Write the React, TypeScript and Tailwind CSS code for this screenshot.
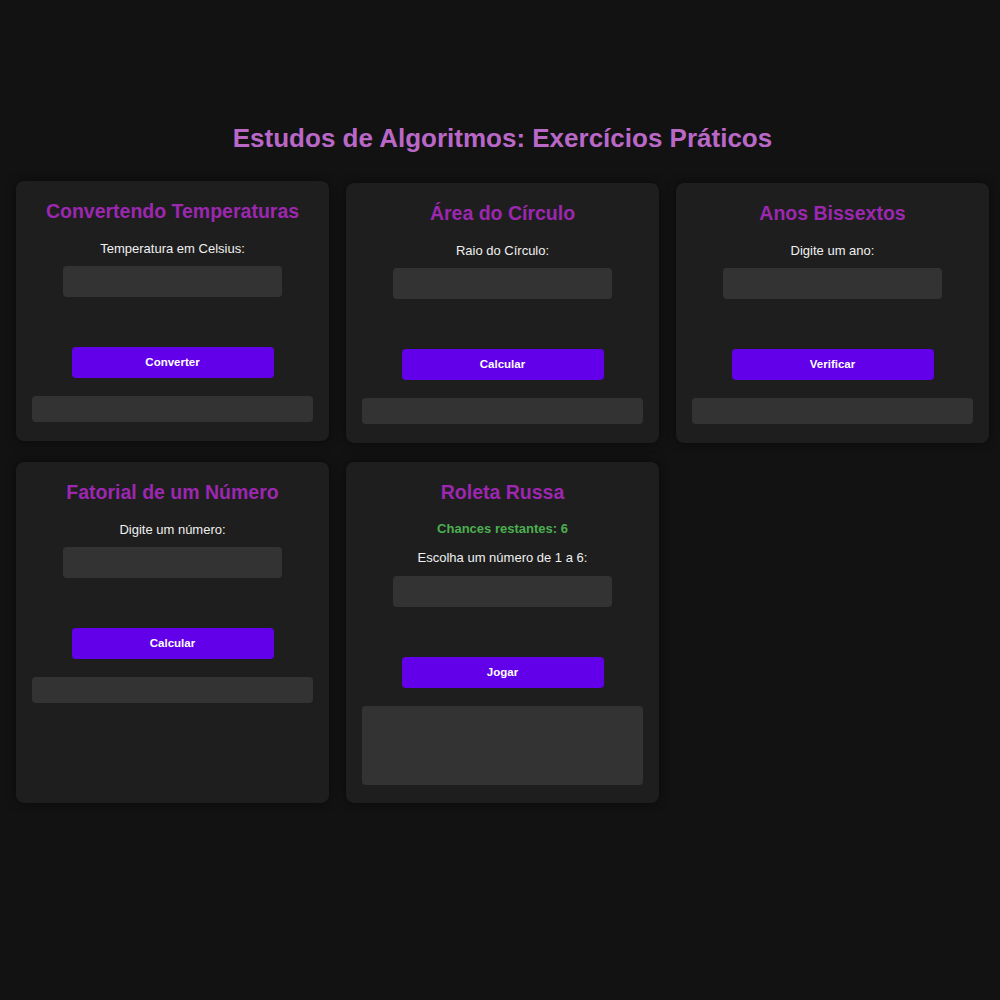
import { useState } from "react";

type Exercise = {
  title: string;
  label: string;
  button: string;
  chances?: number;
  resultHeight: string;
};

const EXERCISES: Exercise[] = [
  { title: "Convertendo Temperaturas", label: "Temperatura em Celsius:", button: "Converter", resultHeight: "h-[26px]" },
  { title: "Área do Círculo", label: "Raio do Círculo:", button: "Calcular", resultHeight: "h-[26px]" },
  { title: "Anos Bissextos", label: "Digite um ano:", button: "Verificar", resultHeight: "h-[26px]" },
  { title: "Fatorial de um Número", label: "Digite um número:", button: "Calcular", resultHeight: "h-[26px]" },
  { title: "Roleta Russa", label: "Escolha um número de 1 a 6:", button: "Jogar", chances: 6, resultHeight: "h-[79px]" },
];

const ExerciseCard = ({ exercise, lifted }: { exercise: Exercise; lifted?: boolean }) => {
  const [value, setValue] = useState("");
  const hasChances = exercise.chances !== undefined;

  return (
    <div
      className={`flex flex-col items-center rounded-lg bg-[#1e1e1e] px-4 pt-[18px] ${
        hasChances ? "pb-[18px]" : "pb-[19px]"
      } shadow-[0_0_10px_rgba(0,0,0,0.5)] ${lifted ? "-translate-y-[2px]" : ""}`}
    >
      <h2 className="text-[19.5px] leading-[24px] font-bold text-[#9c27b0]">{exercise.title}</h2>
      {hasChances && (
        <p className="mt-[17px] text-[13px] leading-[16px] font-bold text-[#4caf50]">
          Chances restantes: {exercise.chances}
        </p>
      )}
      <label className={`${hasChances ? "mt-[13px]" : "mt-[18px]"} text-[13px] leading-[16px] text-[#f0f0f0]`}>
        {exercise.label}
      </label>
      <input
        value={value}
        onChange={(e) => setValue(e.target.value)}
        className={`${hasChances ? "mt-[10px]" : "mt-[9px]"} h-[31px] w-[219px] rounded bg-[#333] px-2 text-sm text-white outline-none`}
      />
      <button className="mt-[50px] h-[31px] w-[202px] rounded bg-[#6200ea] text-[11.5px] font-bold text-white">
        {exercise.button}
      </button>
      <div className={`mt-[18px] w-full rounded bg-[#333] ${exercise.resultHeight}`} />
    </div>
  );
};

export default function App() {
  return (
    <div className="min-h-screen bg-[#121212] font-['Liberation_Sans',Arial,sans-serif]">
      <div className="ml-4 w-[973px] pt-[122px] pb-10">
        <h1 className="text-center text-[26px] leading-[32px] font-bold text-[#ba68c8]">
          Estudos de Algoritmos: Exercícios Práticos
        </h1>
        <div className="mt-[29px] grid grid-cols-[repeat(3,313px)] gap-x-[17px] gap-y-[19px]">
          {EXERCISES.map((ex, i) => (
            <ExerciseCard key={ex.title} exercise={ex} lifted={i === 0} />
          ))}
        </div>
      </div>
    </div>
  );
}
